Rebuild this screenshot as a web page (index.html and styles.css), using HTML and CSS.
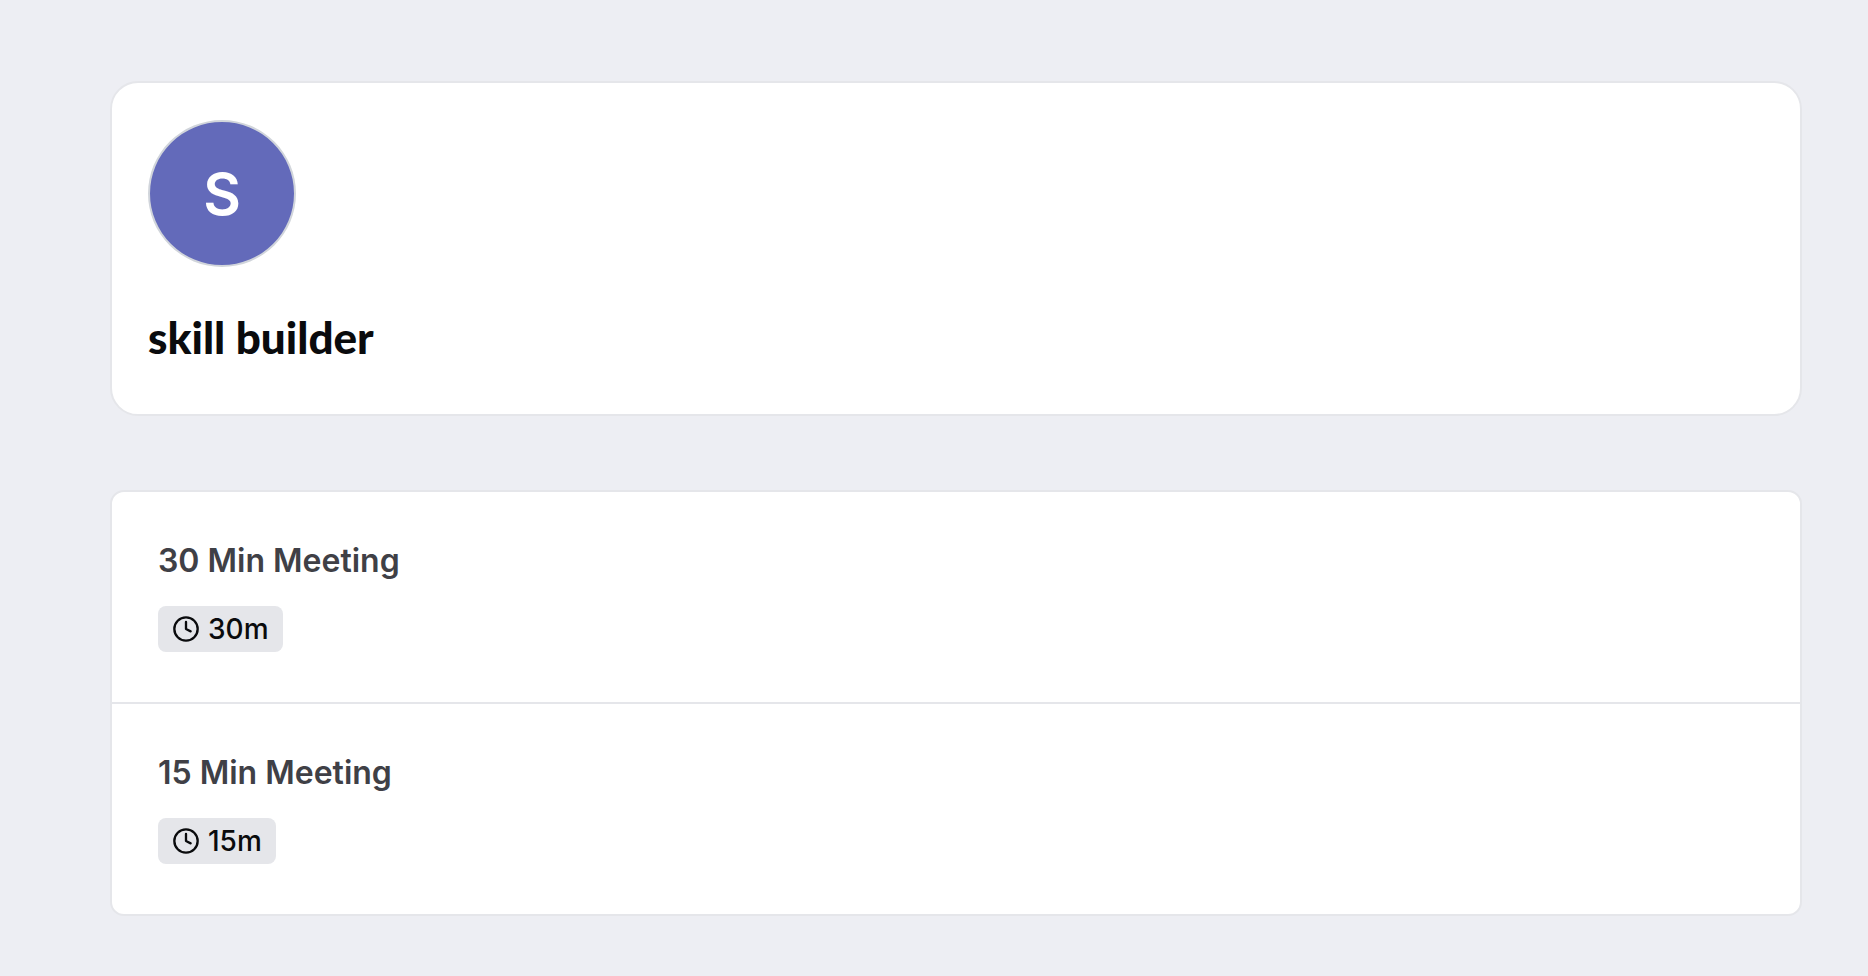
FILE: index.html
```
<!DOCTYPE html>
<html lang="en">
<head>
	<meta charset="UTF-8">
	<meta name="viewport" content="width=device-width, initial-scale=1">
	<title>skill builder</title>
	<link rel="stylesheet" href="styles.css">
</head>
<body>
	<main class="booking">
		<header class="profile">
			<div class="avatar">S</div>
			<h1 class="name">skill builder</h1>
		</header>
		<ul class="events">
			<li class="event">
				<a class="event-link" href="#30min">
					<h2 class="event-title">30 Min Meeting</h2>
					<span class="badge">
						<svg class="icon" viewBox="0 0 24 24" aria-hidden="true">
							<circle cx="12" cy="12" r="10"/>
							<polyline points="12 6 12 12 16 14"/>
						</svg>
						30m
					</span>
				</a>
			</li>
			<li class="event">
				<a class="event-link" href="#15min">
					<h2 class="event-title">15 Min Meeting</h2>
					<span class="badge">
						<svg class="icon" viewBox="0 0 24 24" aria-hidden="true">
							<circle cx="12" cy="12" r="10"/>
							<polyline points="12 6 12 12 16 14"/>
						</svg>
						15m
					</span>
				</a>
			</li>
		</ul>
	</main>
</body>
</html>
```

FILE: styles.css
```
* {
	box-sizing: border-box;
}
body {
	background-color: #edeef3;
	color: #0a0b0d;
	font-family: Inter, sans-serif;
	margin: 0;
}
h1, h2, ul {
	margin: 0;
	padding: 0;
}

/* main column */
.booking {
	display: flex;
	flex-direction: column;
	gap: 74px;
	padding: 81px 66px 59px 110px;
}

/* profile card */
.profile {
	background-color: #fff;
	border: 2px solid #e5e6ea;
	border-radius: 28px;
	padding: 37px 36px 49px;
}
.avatar {
	align-items: center;
	background-color: #636aba;
	border: 2px solid #d1d5db;
	border-radius: 50%;
	color: #fff;
	display: flex;
	font-size: 58px;
	font-weight: 600;
	height: 147px;
	justify-content: center;
	width: 148px;
}
.name {
	font-family: Lato, sans-serif;
	font-size: 44px;
	font-weight: 900;
	line-height: 56px;
	margin-top: 42px;
}

/* event list */
.events {
	background-color: #fff;
	border: 2px solid #e5e6ea;
	border-radius: 14px;
	list-style: none;
	overflow: hidden;
}
.event + .event {
	border-top: 2px solid #e5e6ea;
}
.event-link {
	align-items: flex-start;
	color: inherit;
	display: flex;
	flex-direction: column;
	gap: 25px;
	padding: 49px 46px 50px;
	text-decoration: none;
}
.event-title {
	color: #3f4046;
	font-size: 32px;
	font-weight: 600;
	line-height: 40px;
}
.badge {
	align-items: center;
	background-color: #e5e6ea;
	border-radius: 8px;
	display: flex;
	font-size: 28px;
	font-weight: 500;
	gap: 8px;
	line-height: 46px;
	padding: 0 14px;
}
.icon {
	fill: none;
	height: 28px;
	stroke: currentColor;
	stroke-linecap: round;
	stroke-linejoin: round;
	stroke-width: 2;
	width: 28px;
}
```
